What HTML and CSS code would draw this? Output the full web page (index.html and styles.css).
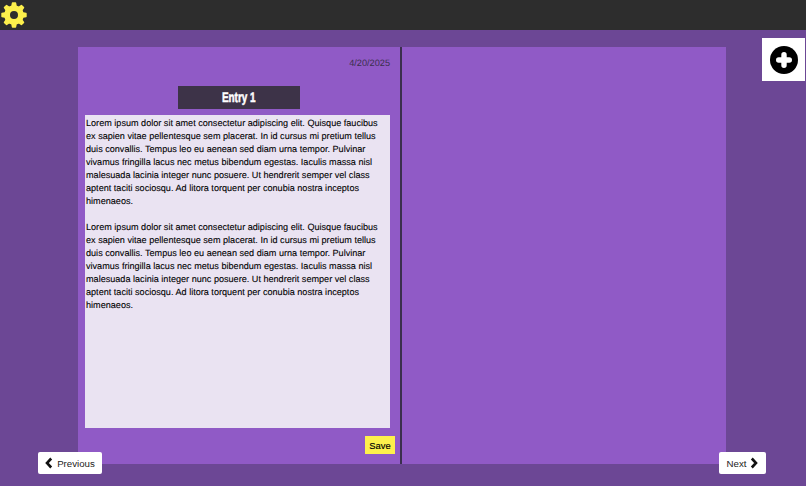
FILE: index.html
```html
<!DOCTYPE html>
<html lang="en">
<head>
<meta charset="utf-8">
<title>Journal</title>
<link rel="stylesheet" href="styles.css">
</head>
<body>
<header class="topbar">
  <svg class="gear" viewBox="0 0 26 26" aria-hidden="true">
    <circle cx="13" cy="13" r="6.9" fill="none" stroke="#fdf04c" stroke-width="5.8"/>
    <g fill="#fdf04c">
      <path d="M10 5 10.8.9q.1-.6.7-.6h3q.6 0 .7.6L16 5z"/>
      <path d="M10 5 10.8.9q.1-.6.7-.6h3q.6 0 .7.6L16 5z" transform="rotate(45 13 13)"/>
      <path d="M10 5 10.8.9q.1-.6.7-.6h3q.6 0 .7.6L16 5z" transform="rotate(90 13 13)"/>
      <path d="M10 5 10.8.9q.1-.6.7-.6h3q.6 0 .7.6L16 5z" transform="rotate(135 13 13)"/>
      <path d="M10 5 10.8.9q.1-.6.7-.6h3q.6 0 .7.6L16 5z" transform="rotate(180 13 13)"/>
      <path d="M10 5 10.8.9q.1-.6.7-.6h3q.6 0 .7.6L16 5z" transform="rotate(225 13 13)"/>
      <path d="M10 5 10.8.9q.1-.6.7-.6h3q.6 0 .7.6L16 5z" transform="rotate(270 13 13)"/>
      <path d="M10 5 10.8.9q.1-.6.7-.6h3q.6 0 .7.6L16 5z" transform="rotate(315 13 13)"/>
    </g>
  </svg>
</header>
<main class="desk">
  <div class="book">
    <section class="page page-left">
      <div class="date">4/20/2025</div>
      <h1 class="entry-title"><span>Entry 1</span></h1>
      <div class="entry-text">
        <p>Lorem ipsum dolor sit amet consectetur adipiscing elit. Quisque faucibus ex sapien vitae pellentesque sem placerat. In id cursus mi pretium tellus duis convallis. Tempus leo eu aenean sed diam urna tempor. Pulvinar vivamus fringilla lacus nec metus bibendum egestas. Iaculis massa nisl malesuada lacinia integer nunc posuere. Ut hendrerit semper vel class aptent taciti sociosqu. Ad litora torquent per conubia nostra inceptos himenaeos.</p>
        <p>Lorem ipsum dolor sit amet consectetur adipiscing elit. Quisque faucibus ex sapien vitae pellentesque sem placerat. In id cursus mi pretium tellus duis convallis. Tempus leo eu aenean sed diam urna tempor. Pulvinar vivamus fringilla lacus nec metus bibendum egestas. Iaculis massa nisl malesuada lacinia integer nunc posuere. Ut hendrerit semper vel class aptent taciti sociosqu. Ad litora torquent per conubia nostra inceptos himenaeos.</p>
      </div>
      <div class="save-row"><button class="save">Save</button></div>
    </section>
    <section class="page page-right"></section>
  </div>
  <button class="add" aria-label="Add entry">
    <svg viewBox="0 0 28 28" aria-hidden="true">
      <circle cx="14" cy="14" r="14" fill="#000"/>
      <path d="M14 8.7v10.6M8.7 14h10.6" stroke="#fff" stroke-width="5.4" stroke-linecap="round"/>
    </svg>
  </button>
  <button class="nav nav-prev">
    <svg viewBox="0 0 8 12" aria-hidden="true"><path d="M6.2 1.5 2 6l4.2 4.5" fill="none" stroke="#111" stroke-width="2.6"/></svg>
    Previous
  </button>
  <button class="nav nav-next">
    Next
    <svg viewBox="0 0 8 12" aria-hidden="true"><path d="M1.8 1.5 6 6l-4.2 4.5" fill="none" stroke="#111" stroke-width="2.6"/></svg>
  </button>
</main>
</body>
</html>
```
FILE: styles.css
```css
* { box-sizing: border-box; }
html, body { margin: 0; height: 100%; }
body {
  display: flex;
  flex-direction: column;
  height: 486px;
  overflow: hidden;
  background: #6c4795;
  font-family: "Liberation Sans", Arial, sans-serif;
  color: #111;
  text-rendering: geometricPrecision;
}
.topbar {
  flex: none;
  height: 30px;
  background: #2d2d2d;
  display: flex;
  align-items: center;
  padding: 0 0 1px 1px;
}
.gear { width: 26px; height: 26px; display: block; }
.desk {
  flex: 1;
  position: relative;
  padding: 17px 80px 22px 78px;
}
.book {
  display: flex;
  height: 417px;
  background: #905ac6;
}
.page-left {
  width: 324px;
  border-right: 2px solid #3a2f4d;
  padding: 11px 10px 0 7px;
  display: flex;
  flex-direction: column;
}
.page-right { flex: 1; }
.date {
  text-align: right;
  font-size: 9.2px;
  line-height: 11px;
  color: #3a2f4d;
  height: 12px;
}
.entry-title {
  margin: 16px 0 6px 93px;
  width: 122px;
  height: 23px;
  background: #3d3348;
  color: #fff;
  font-size: 14px;
  line-height: 23px;
  font-weight: 700;
  text-align: center;
}
.entry-title span {
  display: inline-block;
  transform: scaleX(0.71);
  -webkit-text-stroke: 0.5px #fff;
}
.entry-text {
  height: 313px;
  background: #eae3f2;
  padding: 2px 1px;
  font-size: 9.1px;
  line-height: 13px;
  color: #000;
  -webkit-text-stroke: 0.1px #000;
}
.entry-text p { margin: 0 0 13px; }
.save-row {
  display: flex;
  justify-content: flex-end;
  margin: 8px -5px 0 0;
}
.save {
  width: 30px;
  height: 18px;
  padding: 0;
  border: 0;
  background: #fdf04c;
  font: 9.4px "Liberation Sans", Arial, sans-serif;
  color: #000;
  -webkit-text-stroke: 0.15px #000;
}
.add {
  position: absolute;
  top: 8px;
  right: 1px;
  width: 43px;
  height: 43px;
  padding: 0;
  border: 0;
  background: #fff;
  display: flex;
  align-items: center;
  justify-content: center;
}
.add svg { width: 28px; height: 28px; display: block; }
.nav {
  position: absolute;
  top: 422px;
  height: 22px;
  padding: 0;
  border: 0;
  border-radius: 2px;
  background: #fff;
  font: 9.7px "Liberation Sans", Arial, sans-serif;
  color: #222;
  display: flex;
  align-items: center;
  justify-content: center;
  gap: 4px;
}
.nav svg { width: 8px; height: 12px; display: block; }
.nav-prev { left: 38px; width: 64px; }
.nav-next { left: 719px; width: 47px; }
```
